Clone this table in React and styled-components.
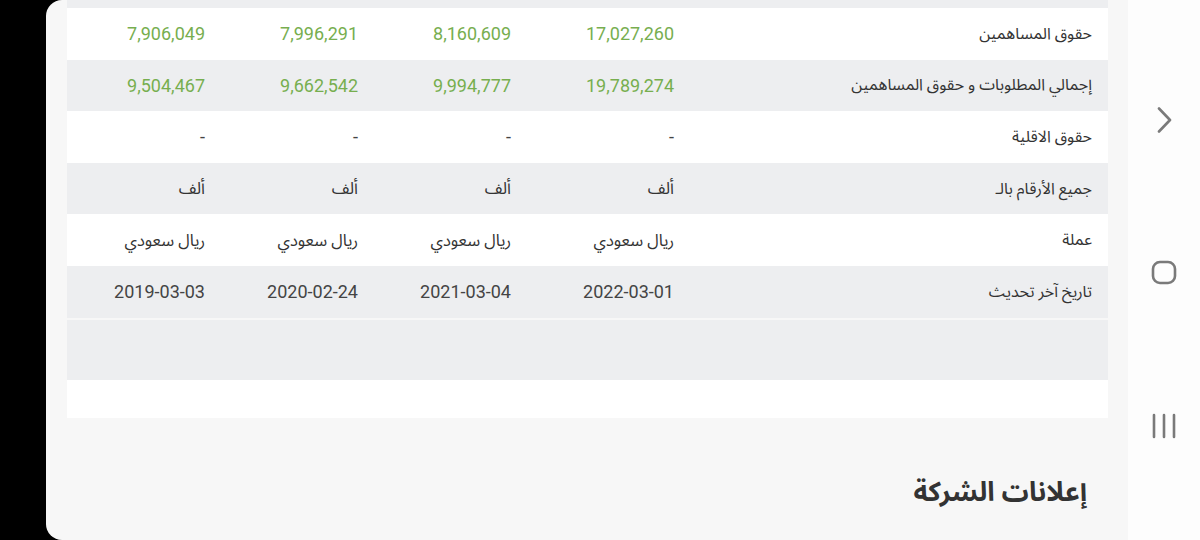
import React from "react";
import styled, { createGlobalStyle } from "styled-components";

const GlobalStyle = createGlobalStyle`
  html, body {
    margin: 0;
    padding: 0;
    background: #000;
  }
  body {
    font-family: Roboto, "Noto Sans Arabic", "Noto Sans", "DejaVu Sans", sans-serif;
  }
`;

const Screen = styled.div`
  width: 1200px;
  height: 540px;
  display: flex;
  overflow: hidden;
  background: #000;
`;

const Panel = styled.main`
  margin-left: 46px;
  width: 1082px;
  height: 540px;
  background: #f7f7f7;
  border-radius: 16px 0 0 16px;
  padding: 0 20px 0 21px;
  box-sizing: border-box;
  display: flex;
  flex-direction: column;
`;

const Table = styled.div`
  background: #fff;
  display: flex;
  flex-direction: column;
`;

const Cut = styled.div`
  height: 8px;
  background: #edeef0;
`;

const Row = styled.div`
  direction: rtl;
  display: grid;
  grid-template-columns: 1fr 163px 153px 153px 154px;
  align-items: center;
  height: ${(p) => p.$h || 51.6}px;
  background: ${(p) => (p.$alt ? "#edeef0" : "#fff")};
  border-top: ${(p) => (p.$line ? "2px solid #f7f7f7" : "none")};
`;

const Label = styled.div`
  padding-right: 16px;
  font-size: 16px;
  color: #333;
  text-align: right;
  white-space: nowrap;
`;

const Value = styled.div`
  padding: 0 16px;
  direction: ${(p) => (p.$rtl ? "rtl" : "ltr")};
  text-align: right;
  text-align: ${(p) => (p.$rtl ? "start" : "right")};
  font-size: ${(p) => (p.$rtl ? 16.5 : 18)}px;
  color: ${(p) => (p.$green ? "#77ae4f" : p.$rtl ? "#333" : "#444")};
  white-space: nowrap;
`;

const Heading = styled.h2`
  direction: rtl;
  margin: 46px 0 0;
  padding-right: 21px;
  font-size: 27px;
  font-weight: 700;
  color: #333;
  text-align: right;
`;

const NavBar = styled.nav`
  flex: 1;
  background: #fdfdfd;
  display: flex;
  flex-direction: column;
  align-items: center;
  justify-content: center;
  gap: 127px;
  padding-top: 6px;
  box-sizing: border-box;
`;

const NavIcon = styled.svg`
  width: 26px;
  height: 26px;
  display: block;
  stroke: #7a7a7a;
  fill: none;
  stroke-width: 2.6;
  stroke-linecap: round;
  stroke-linejoin: round;
`;

const rows = [
  { label: "حقوق المساهمين", values: ["17,027,260", "8,160,609", "7,996,291", "7,906,049"], green: true },
  { label: "إجمالي المطلوبات و حقوق المساهمين", values: ["19,789,274", "9,994,777", "9,662,542", "9,504,467"], green: true },
  { label: "حقوق الاقلية", values: ["-", "-", "-", "-"] },
  { label: "جميع الأرقام بالـ", values: ["ألف", "ألف", "ألف", "ألف"], arabic: true },
  { label: "عملة", values: ["ريال سعودي", "ريال سعودي", "ريال سعودي", "ريال سعودي"], arabic: true },
  { label: "تاريخ آخر تحديث", values: ["2022-03-01", "2021-03-04", "2020-02-24", "2019-03-03"] },
];

const App = () => {
  return (
    <>
      <GlobalStyle />
      <Screen>
        <Panel>
          <Table>
            <Cut />
            {rows.map((r, i) => (
              <Row key={r.label} $alt={i % 2 === 1}>
                <Label>{r.label}</Label>
                {r.values.map((v, j) => (
                  <Value key={j} $green={r.green} $rtl={r.arabic}>
                    {v}
                  </Value>
                ))}
              </Row>
            ))}
            <Row $alt $line $h={60} />
            <Row $h={38} />
          </Table>
          <Heading>إعلانات الشركة</Heading>
        </Panel>
        <NavBar>
          <NavIcon viewBox="0 0 26 26">
            <path d="M8 1.5 L19 13 L8 24.5" />
          </NavIcon>
          <NavIcon viewBox="0 0 26 26">
            <rect x="2" y="2" width="22" height="21" rx="7" />
          </NavIcon>
          <NavIcon viewBox="0 0 26 26">
            <path d="M3 2 V24 M13 2 V24 M23 2 V24" />
          </NavIcon>
        </NavBar>
      </Screen>
    </>
  );
};

export default App;
